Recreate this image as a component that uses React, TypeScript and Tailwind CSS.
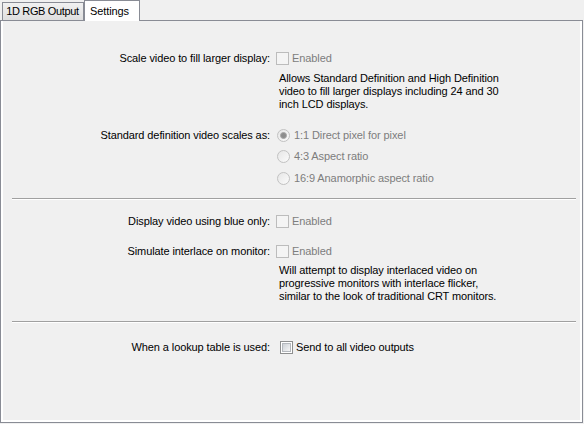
import React from "react";

const font = { fontFamily: '"Liberation Sans", Arial, sans-serif' };

function CheckBox({ disabled }: { disabled?: boolean }) {
  if (disabled) {
    return <span className="box-border block h-[13px] w-[13px] shrink-0 border border-[#bcbcbc] bg-[#f4f4f4]" />;
  }
  return (
    <span className="box-border flex h-[13px] w-[13px] shrink-0 items-center justify-center border border-[#8e8f8f] bg-white">
      <span className="box-border block h-[9px] w-[9px] border border-[#b4b8bd] bg-linear-to-br from-[#cdd1d6] to-[#f6f6f6]" />
    </span>
  );
}

function Radio({ checked }: { checked?: boolean }) {
  return (
    <span className="box-border flex h-[13px] w-[13px] shrink-0 items-center justify-center rounded-full border border-[#c2c2c2] bg-linear-to-br from-[#e6e6e6] to-[#fbfbfb]">
      {checked && <span className="block h-[7px] w-[7px] rounded-full border border-[#a8a8a8] bg-[#8d8d8d]" />}
    </span>
  );
}

function Label({ text }: { text: string }) {
  return <span className="w-[269px] shrink-0 whitespace-nowrap text-right text-black">{text}</span>;
}

function Separator({ top }: { top: string }) {
  return <div className={`${top} ml-[11px] h-[2px] w-[564px] border-t border-b border-t-[#a0a0a0] border-b-white`} />;
}

export default function App() {
  return (
    <div className="h-[424px] w-[584px] bg-[#f0f0f0] text-[11px] leading-[13px] tracking-[-0.1px]" style={font}>
      <div className="relative flex h-[20px] items-end">
        <div className="ml-[2px] box-border flex h-[18px] w-[82px] items-center justify-center whitespace-nowrap border border-b-0 border-[#898c95] bg-linear-to-b from-[#f1f1f1] to-[#dfdfdf] pr-[1px] tracking-[-0.35px] text-black">
          1D RGB Output
        </div>
        <div className="relative z-10 box-border flex h-[21px] w-[56px] items-center self-start whitespace-nowrap border border-b-0 border-[#898c95] bg-white pl-[5px] text-black">
          Settings
        </div>
      </div>
      <div className="box-border h-[403px] w-[583px] border border-[#898c95] shadow-[inset_2px_0_0_#fff,inset_-2px_0_0_#fff,inset_0_-2px_0_#fff]">
        <div className="flex flex-col">
          <div className="mt-[31px] flex h-[13px] items-center">
            <Label text="Scale video to fill larger display:" />
            <span className="ml-[6px]"><CheckBox disabled /></span>
            <span className="ml-[3px] text-[#7d7d7d]">Enabled</span>
          </div>
          <div className="ml-[278px] mt-[7px] whitespace-nowrap text-black">
            Allows Standard Definition and High Definition
            <br />
            video to fill larger displays including 24 and 30
            <br />
            inch LCD displays.
          </div>

          <div className="mt-[18px] flex h-[13px] items-center">
            <Label text="Standard definition video scales as:" />
            <span className="ml-[7px]"><Radio checked /></span>
            <span className="ml-[4px] text-[#7d7d7d]">1:1 Direct pixel for pixel</span>
          </div>
          <div className="mt-[8px] flex h-[13px] items-center pl-[276px]">
            <Radio />
            <span className="ml-[4px] text-[#7d7d7d]">4:3 Aspect ratio</span>
          </div>
          <div className="mt-[9px] flex h-[13px] items-center pl-[276px]">
            <Radio />
            <span className="ml-[4px] text-[#7d7d7d]">16:9 Anamorphic aspect ratio</span>
          </div>

          <Separator top="mt-[13px]" />

          <div className="mt-[15px] flex h-[13px] items-center">
            <Label text="Display video using blue only:" />
            <span className="ml-[6px]"><CheckBox disabled /></span>
            <span className="ml-[3px] text-[#7d7d7d]">Enabled</span>
          </div>
          <div className="mt-[17px] flex h-[13px] items-center">
            <Label text="Simulate interlace on monitor:" />
            <span className="ml-[6px]"><CheckBox disabled /></span>
            <span className="ml-[3px] text-[#7d7d7d]">Enabled</span>
          </div>
          <div className="ml-[278px] mt-[6px] whitespace-nowrap text-black">
            Will attempt to display interlaced video on
            <br />
            progressive monitors with interlace flicker,
            <br />
            similar to the look of traditional CRT monitors.
          </div>

          <Separator top="mt-[18px]" />

          <div className="mt-[18px] flex h-[13px] items-center">
            <Label text="When a lookup table is used:" />
            <span className="ml-[10px]"><CheckBox /></span>
            <span className="ml-[3px] text-black">Send to all video outputs</span>
          </div>
        </div>
      </div>
    </div>
  );
}
